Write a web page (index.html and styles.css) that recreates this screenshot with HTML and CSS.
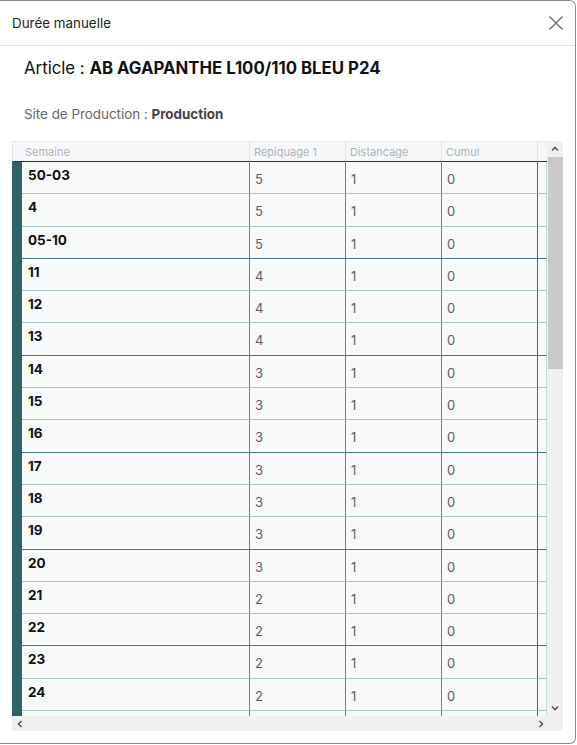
FILE: index.html
```html
<!DOCTYPE html>
<html lang="fr">
<head>
<meta charset="utf-8">
<title>Durée manuelle</title>
<link rel="stylesheet" href="styles.css">
</head>
<body>
<div class="dialog">
  <div class="dlg-header">
    <span class="dlg-title">Durée manuelle</span>
    <svg class="close" width="16" height="16" viewBox="0 0 16 16"><path d="M1.5 1.5 L14.5 14.5 M14.5 1.5 L1.5 14.5" stroke="#6b6b6b" stroke-width="1.4" fill="none"/></svg>
  </div>
  <div class="dlg-body">
    <div class="article">Article : <b>AB AGAPANTHE L100/110 BLEU P24</b></div>
    <div class="site">Site de Production : <b>Production</b></div>
    <div class="grid-wrap">
      <div class="viewport">
        <div class="row head">
          <div class="c c-sem">Semaine</div>
          <div class="c c-num">Repiquage 1</div>
          <div class="c c-num">Distancage</div>
          <div class="c c-num">Cumul</div>
          <div class="c c-end"></div>
        </div>
        <div class="rows">
          <div class="row"><div class="bar"></div><div class="c c-sem">50-03</div><div class="c c-num">5</div><div class="c c-num">1</div><div class="c c-num">0</div><div class="c c-end"></div></div>
          <div class="row"><div class="bar"></div><div class="c c-sem">4</div><div class="c c-num">5</div><div class="c c-num">1</div><div class="c c-num">0</div><div class="c c-end"></div></div>
          <div class="row grp"><div class="bar"></div><div class="c c-sem">05-10</div><div class="c c-num">5</div><div class="c c-num">1</div><div class="c c-num">0</div><div class="c c-end"></div></div>
          <div class="row"><div class="bar"></div><div class="c c-sem">11</div><div class="c c-num">4</div><div class="c c-num">1</div><div class="c c-num">0</div><div class="c c-end"></div></div>
          <div class="row"><div class="bar"></div><div class="c c-sem">12</div><div class="c c-num">4</div><div class="c c-num">1</div><div class="c c-num">0</div><div class="c c-end"></div></div>
          <div class="row grp"><div class="bar"></div><div class="c c-sem">13</div><div class="c c-num">4</div><div class="c c-num">1</div><div class="c c-num">0</div><div class="c c-end"></div></div>
          <div class="row"><div class="bar"></div><div class="c c-sem">14</div><div class="c c-num">3</div><div class="c c-num">1</div><div class="c c-num">0</div><div class="c c-end"></div></div>
          <div class="row"><div class="bar"></div><div class="c c-sem">15</div><div class="c c-num">3</div><div class="c c-num">1</div><div class="c c-num">0</div><div class="c c-end"></div></div>
          <div class="row grp"><div class="bar"></div><div class="c c-sem">16</div><div class="c c-num">3</div><div class="c c-num">1</div><div class="c c-num">0</div><div class="c c-end"></div></div>
          <div class="row"><div class="bar"></div><div class="c c-sem">17</div><div class="c c-num">3</div><div class="c c-num">1</div><div class="c c-num">0</div><div class="c c-end"></div></div>
          <div class="row"><div class="bar"></div><div class="c c-sem">18</div><div class="c c-num">3</div><div class="c c-num">1</div><div class="c c-num">0</div><div class="c c-end"></div></div>
          <div class="row grp"><div class="bar"></div><div class="c c-sem">19</div><div class="c c-num">3</div><div class="c c-num">1</div><div class="c c-num">0</div><div class="c c-end"></div></div>
          <div class="row"><div class="bar"></div><div class="c c-sem">20</div><div class="c c-num">3</div><div class="c c-num">1</div><div class="c c-num">0</div><div class="c c-end"></div></div>
          <div class="row"><div class="bar"></div><div class="c c-sem">21</div><div class="c c-num">2</div><div class="c c-num">1</div><div class="c c-num">0</div><div class="c c-end"></div></div>
          <div class="row grp"><div class="bar"></div><div class="c c-sem">22</div><div class="c c-num">2</div><div class="c c-num">1</div><div class="c c-num">0</div><div class="c c-end"></div></div>
          <div class="row"><div class="bar"></div><div class="c c-sem">23</div><div class="c c-num">2</div><div class="c c-num">1</div><div class="c c-num">0</div><div class="c c-end"></div></div>
          <div class="row"><div class="bar"></div><div class="c c-sem">24</div><div class="c c-num">2</div><div class="c c-num">1</div><div class="c c-num">0</div><div class="c c-end"></div></div>
          <div class="row grp"><div class="bar"></div><div class="c c-sem"></div><div class="c c-num"></div><div class="c c-num"></div><div class="c c-num"></div><div class="c c-end"></div></div>
        </div>
      </div>
      <div class="vscroll">
        <svg class="arr" width="10" height="8" viewBox="0 0 10 8"><path d="M2 5.5 L5 2.5 L8 5.5" stroke="#555" stroke-width="1.6" fill="none"/></svg>
        <div class="thumb"></div>
        <div class="vspace"></div>
        <svg class="arr" width="10" height="8" viewBox="0 0 10 8"><path d="M2 2.5 L5 5.5 L8 2.5" stroke="#555" stroke-width="1.6" fill="none"/></svg>
      </div>
      <div class="hscroll">
        <svg width="8" height="10" viewBox="0 0 8 10"><path d="M5.5 2 L2.5 5 L5.5 8" stroke="#555" stroke-width="1.6" fill="none"/></svg>
        <svg width="8" height="10" viewBox="0 0 8 10"><path d="M2.5 2 L5.5 5 L2.5 8" stroke="#555" stroke-width="1.6" fill="none"/></svg>
      </div>
      <div class="corner"></div>
    </div>
  </div>
</div>
</body>
</html>
```
FILE: styles.css
```css
* { box-sizing: border-box; }
html, body { margin: 0; padding: 0; background: #ffffff; }
body { font-family: Inter, Roboto, "Liberation Sans", sans-serif; color: #222; }

.dialog {
  width: 576px;
  height: 744px;
  border: 1px solid #8a8a8a;
  border-left: none;
  border-radius: 0 6px 6px 0;
  background: #fff;
  display: flex;
  flex-direction: column;
  overflow: hidden;
}

.dlg-header {
  height: 45px;
  flex: none;
  display: flex;
  align-items: center;
  justify-content: space-between;
  padding: 0 11px 0 12px;
  border-bottom: 1px solid #e4e4e4;
}
.dlg-title { font-size: 13.4px; color: #222; }
.close { display: block; }

.dlg-body {
  flex: 1;
  padding: 0 12px;
  display: flex;
  flex-direction: column;
}

.article {
  font-size: 16.8px;
  color: #111;
  padding: 12px 0 0 12px;
  height: 47px;
}
.article b { font-weight: 700; }

.site {
  font-size: 13.4px;
  color: #666;
  padding: 13px 0 0 12px;
  height: 48px;
}
.site b { color: #444; font-weight: 700; }

.grid-wrap {
  width: 551px;
  height: 590px;
  display: grid;
  grid-template-columns: 535px 16px;
  grid-template-rows: 575px 15px;
}

.viewport {
  overflow: hidden;
  background: #f8f9f9;
  display: flex;
  flex-direction: column;
}

.row {
  display: grid;
  grid-template-columns: 10px 227px 96px 96px 96px 10px;
  height: 32.3px;
  flex: none;
}
.row .bar { background: #2f6368; }
.row .c { border-bottom: 1px solid #a9c6c7; border-left: 1px solid #5a878b; }
.row .c-sem { border-left: none; font-weight: 700; font-size: 13.5px; color: #111; padding: 5px 0 0 6px; }
.row .c-num { font-size: 13px; color: #5f5f5f; padding: 9px 0 0 5px; }
.row .c-end { border-left: 1.5px solid #3c6c70; border-right: 1px solid #c9dadb; }
.row.grp .c { border-bottom: 1.5px solid #4a7a7e; }

.row.head {
  grid-template-columns: 237px 96px 96px 96px 10px;
  height: 21px;
  background: #f6f7f8;
  border-top: 1px solid #e8e8e8;
}
.row.head .c {
  border-bottom: 1.5px solid #2d3436;
  border-left: 1px solid #e2e4e6;
  font-size: 11px;
  font-weight: 400;
  color: #b0b4b8;
  padding: 3px 0 0 4px;
}
.row.head .c-sem { border-left: 1px solid #e8e8e8; padding-left: 12px; }
.row.head .c-end { border-right: none; border-left: 1px solid #e2e4e6; }

.rows { display: flex; flex-direction: column; }

.vscroll {
  background: #f0f0f0;
  display: flex;
  flex-direction: column;
  align-items: center;
}
.vscroll .arr { flex: none; margin: 4px 0; }
.thumb { width: 15px; height: 212px; background: #c9c9c9; flex: none; }
.vspace { flex: 1; }

.hscroll {
  background: #f0f0f0;
  display: flex;
  align-items: center;
  justify-content: space-between;
  padding: 0 2px 0 4px;
}
.corner { background: #f0f0f0; }
```
